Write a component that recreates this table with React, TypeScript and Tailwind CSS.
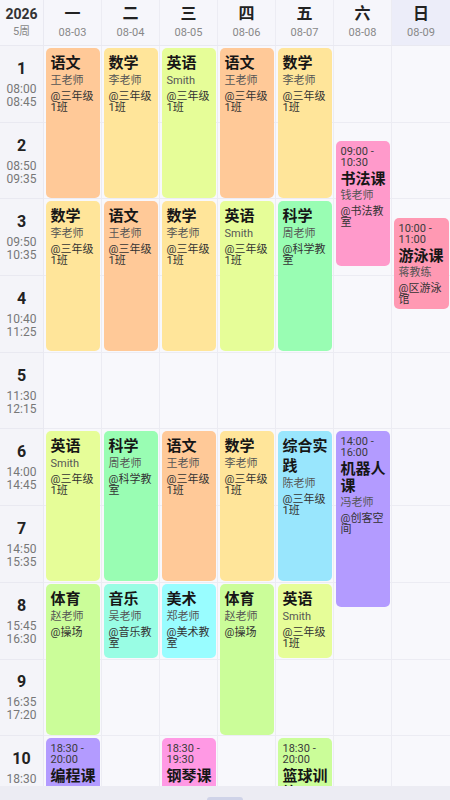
import React from "react";

const RH = 76.7;

const periods: [string, string][] = [
  ["08:00", "08:45"],
  ["08:50", "09:35"],
  ["09:50", "10:35"],
  ["10:40", "11:25"],
  ["11:30", "12:15"],
  ["14:00", "14:45"],
  ["14:50", "15:35"],
  ["15:45", "16:30"],
  ["16:35", "17:20"],
  ["18:30", "19:15"],
];

const days = [
  { n: "一", d: "08-03" },
  { n: "二", d: "08-04" },
  { n: "三", d: "08-05" },
  { n: "四", d: "08-06" },
  { n: "五", d: "08-07" },
  { n: "六", d: "08-08" },
  { n: "日", d: "08-09", today: true },
];

const toMin = (s: string) => {
  const [h, m] = s.split(":").map(Number);
  return h * 60 + m;
};

const timeToY = (t: string) => {
  const m = toMin(t);
  for (let i = 0; i < periods.length; i++) {
    const s = toMin(periods[i][0]);
    const e = toMin(periods[i][1]);
    if (m < s) return i * RH;
    if (m <= e) return i * RH + ((m - s) / (e - s)) * RH;
  }
  const last = periods.length - 1;
  const s = toMin(periods[last][0]);
  return last * RH + ((m - s) / 45) * RH;
};

type Ev = {
  day: number;
  start: string;
  end: string;
  name: string;
  teacher: string;
  loc: string;
  color: string;
  showTime?: boolean;
};

const C = {
  yuwen: "bg-[#ffc998]",
  shuxue: "bg-[#ffe59a]",
  yingyu: "bg-[#e6fd98]",
  kexue: "bg-[#99fdb3]",
  tiyu: "bg-[#cbfd99]",
  yinyue: "bg-[#99fde4]",
  meishu: "bg-[#99fdff]",
  zonghe: "bg-[#99e6fd]",
  purple: "bg-[#b39bff]",
  shufa: "bg-[#ff9acb]",
  youyong: "bg-[#ff99b3]",
  gangqin: "bg-[#ff99e4]",
};

const P = (i: number) => periods[i - 1][0];
const PE = (i: number) => periods[i - 1][1];

const events: Ev[] = [
  { day: 0, start: P(1), end: PE(2), name: "语文", teacher: "王老师", loc: "@三年级1班", color: C.yuwen },
  { day: 0, start: P(3), end: PE(4), name: "数学", teacher: "李老师", loc: "@三年级1班", color: C.shuxue },
  { day: 0, start: P(6), end: PE(7), name: "英语", teacher: "Smith", loc: "@三年级1班", color: C.yingyu },
  { day: 0, start: P(8), end: PE(9), name: "体育", teacher: "赵老师", loc: "@操场", color: C.tiyu },
  { day: 0, start: "18:30", end: "20:00", name: "编程课", teacher: "周老师", loc: "@创客空间", color: C.purple, showTime: true },

  { day: 1, start: P(1), end: PE(2), name: "数学", teacher: "李老师", loc: "@三年级1班", color: C.shuxue },
  { day: 1, start: P(3), end: PE(4), name: "语文", teacher: "王老师", loc: "@三年级1班", color: C.yuwen },
  { day: 1, start: P(6), end: PE(7), name: "科学", teacher: "周老师", loc: "@科学教室", color: C.kexue },
  { day: 1, start: P(8), end: PE(8), name: "音乐", teacher: "吴老师", loc: "@音乐教室", color: C.yinyue },

  { day: 2, start: P(1), end: PE(2), name: "英语", teacher: "Smith", loc: "@三年级1班", color: C.yingyu },
  { day: 2, start: P(3), end: PE(4), name: "数学", teacher: "李老师", loc: "@三年级1班", color: C.shuxue },
  { day: 2, start: P(6), end: PE(7), name: "语文", teacher: "王老师", loc: "@三年级1班", color: C.yuwen },
  { day: 2, start: P(8), end: PE(8), name: "美术", teacher: "郑老师", loc: "@美术教室", color: C.meishu },
  { day: 2, start: "18:30", end: "19:30", name: "钢琴课", teacher: "孙老师", loc: "@琴房", color: C.gangqin, showTime: true },

  { day: 3, start: P(1), end: PE(2), name: "语文", teacher: "王老师", loc: "@三年级1班", color: C.yuwen },
  { day: 3, start: P(3), end: PE(4), name: "英语", teacher: "Smith", loc: "@三年级1班", color: C.yingyu },
  { day: 3, start: P(6), end: PE(7), name: "数学", teacher: "李老师", loc: "@三年级1班", color: C.shuxue },
  { day: 3, start: P(8), end: PE(9), name: "体育", teacher: "赵老师", loc: "@操场", color: C.tiyu },

  { day: 4, start: P(1), end: PE(2), name: "数学", teacher: "李老师", loc: "@三年级1班", color: C.shuxue },
  { day: 4, start: P(3), end: PE(4), name: "科学", teacher: "周老师", loc: "@科学教室", color: C.kexue },
  { day: 4, start: P(6), end: PE(7), name: "综合实践", teacher: "陈老师", loc: "@三年级1班", color: C.zonghe },
  { day: 4, start: P(8), end: PE(8), name: "英语", teacher: "Smith", loc: "@三年级1班", color: C.yingyu },
  { day: 4, start: "18:30", end: "20:00", name: "篮球训练", teacher: "刘教练", loc: "@体育馆", color: C.tiyu, showTime: true },

  { day: 5, start: "09:00", end: "10:30", name: "书法课", teacher: "钱老师", loc: "@书法教室", color: C.shufa, showTime: true },
  { day: 5, start: "14:00", end: "16:00", name: "机器人课", teacher: "冯老师", loc: "@创客空间", color: C.purple, showTime: true },

  { day: 6, start: "10:00", end: "11:00", name: "游泳课", teacher: "蒋教练", loc: "@区游泳馆", color: C.youyong, showTime: true },
];

function Card({ ev }: { ev: Ev }) {
  const top = timeToY(ev.start) + 1.5;
  const bottom = timeToY(ev.end) - 1.5;
  return (
    <div
      className={`absolute left-[1.5px] right-[1.5px] rounded-[5px] overflow-hidden pl-[5px] pr-[4px] pt-[5px] ${ev.color}`}
      style={{ top, height: bottom - top }}
    >
      {ev.showTime && (
        <div className="text-[11px] leading-[11px] text-[#3a3a3a]">
          {ev.start} - {ev.end}
        </div>
      )}
      <div
        className={`text-[15px] font-bold text-[#161616] break-all ${
          ev.showTime ? "leading-[17px] mt-[3px]" : "leading-[20px]"
        }`}
      >
        {ev.name}
      </div>
      <div className="text-[11px] leading-[14px] text-[#555] mt-[1px]">{ev.teacher}</div>
      <div className="text-[11px] leading-[11px] text-[#333] mt-[3px] break-all">{ev.loc}</div>
    </div>
  );
}

export default function App() {
  return (
    <div className="w-[450px] h-[800px] flex flex-col overflow-hidden bg-[#f8f8fc] font-[family-name:Roboto,'Noto_Sans_CJK_SC',sans-serif]">
      <div className="flex-1 overflow-hidden">
        {/* Header */}
        <div className="grid grid-cols-[44px_repeat(7,1fr)] h-[46px] bg-[#f6f6fb] border-b border-[#e9e9f1]">
          <div className="flex flex-col items-center pt-[5px] border-r border-[#e9e9f1]">
            <div className="text-[14px] leading-[18px] font-bold text-[#333]">2026</div>
            <div className="text-[11px] leading-[16px] text-[#888] mt-[1px]">5周</div>
          </div>
          {days.map((d, i) => (
            <div
              key={i}
              className={`flex flex-col items-center pt-[4px] ${i < 6 ? "border-r border-[#ececf3]" : ""} ${
                d.today ? "bg-[#ecedf9]" : ""
              }`}
            >
              <div className="text-[16px] leading-[20px] font-bold text-[#222]">{d.n}</div>
              <div className="text-[11px] leading-[16px] text-[#888] mt-[1px]">{d.d}</div>
            </div>
          ))}
        </div>
        {/* Body */}
        <div className="grid grid-cols-[44px_repeat(7,1fr)]">
          <div className="flex flex-col bg-[#f4f4f9] border-r border-[#e9e9f1]">
            {periods.map((p, i) => (
              <div
                key={i}
                className="h-[76.7px] shrink-0 flex flex-col items-center justify-center border-b border-[#e9e9f1]"
              >
                <div className="text-[16px] leading-[20px] font-bold text-[#222]">{i + 1}</div>
                <div className="mt-[4px] text-[12px] leading-[13px] text-[#777] text-center">
                  <div>{p[0]}</div>
                  <div>{p[1]}</div>
                </div>
              </div>
            ))}
          </div>
          {days.map((d, di) => (
            <div key={di} className={`relative flex flex-col ${di < 6 ? "border-r border-[#ececf3]" : ""}`}>
              {periods.map((_, i) => (
                <div key={i} className="h-[76.7px] shrink-0 border-b border-[#ececf3]" />
              ))}
              {events
                .filter((e) => e.day === di)
                .map((e, k) => (
                  <Card key={k} ev={e} />
                ))}
            </div>
          ))}
        </div>
      </div>
      <div className="h-[14px] shrink-0 bg-[#ececf3] flex justify-center items-end">
        <div className="w-[36px] h-[3px] rounded-t-full bg-[#cfd3e8]" />
      </div>
    </div>
  );
}
